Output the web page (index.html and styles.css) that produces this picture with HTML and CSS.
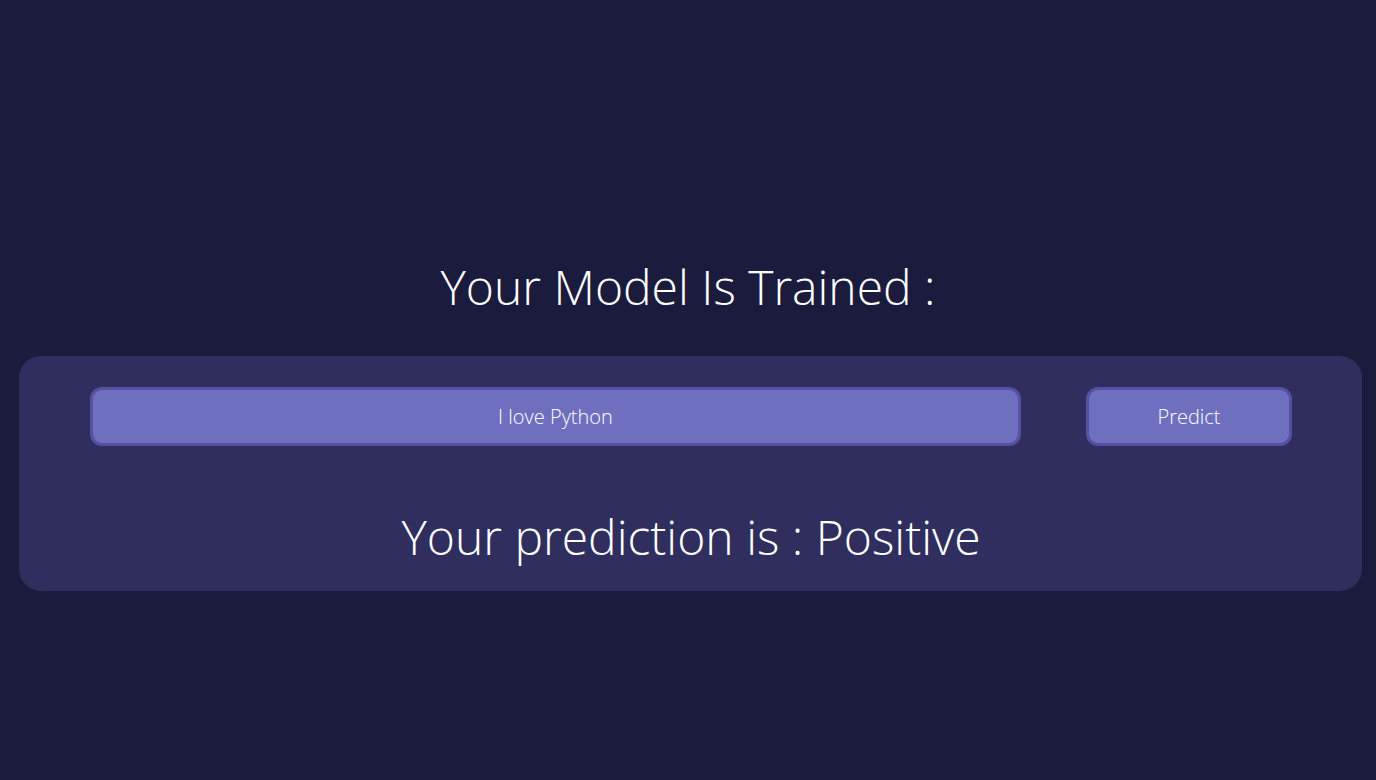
FILE: index.html
```html
<!DOCTYPE html>
<html>
<head>
<meta charset="utf-8">
<link rel="stylesheet" href="styles.css">
</head>
<body>
<main class="page">
  <h1 class="title">Your Model Is Trained :</h1>
  <section class="card">
    <form class="row">
      <input class="text-input" type="text" value="I love Python">
      <button class="btn" type="button">Predict</button>
    </form>
    <h2 class="result">Your prediction is : Positive</h2>
  </section>
</main>
</body>
</html>
```
FILE: styles.css
```css
html, body {
  margin: 0;
  padding: 0;
  background: #1b1b3d;
  height: 100%;
}
body {
  font-family: "Open Sans", "Noto Sans", sans-serif;
  font-weight: 300;
  color: #ffffff;
}
.page {
  padding-top: 252px;
}
.title {
  margin: 0;
  text-align: center;
  font-size: 48px;
  font-weight: 300;
  line-height: 70px;
}
.card {
  margin: 34px 14px 0 19px;
  background: #2f2e5f;
  border-radius: 22px;
  padding: 31px 70px 14px 71px;
}
.row {
  display: flex;
  gap: 65px;
  margin: 0;
}
.text-input, .btn {
  box-sizing: border-box;
  height: 59px;
  background: #6f6fbf;
  border: 3px solid #5252a0;
  border-radius: 12px;
  color: #ffffff;
  font-family: "Open Sans", "Noto Sans", sans-serif;
  font-weight: 300;
  font-size: 20px;
  text-align: center;
  outline: none;
}
.text-input {
  flex: 1;
  padding: 0 10px;
}
.btn {
  width: 206px;
  flex: none;
}
.result {
  margin: 51px 0 0;
  text-align: center;
  font-size: 48px;
  font-weight: 300;
  line-height: 80px;
}
```
